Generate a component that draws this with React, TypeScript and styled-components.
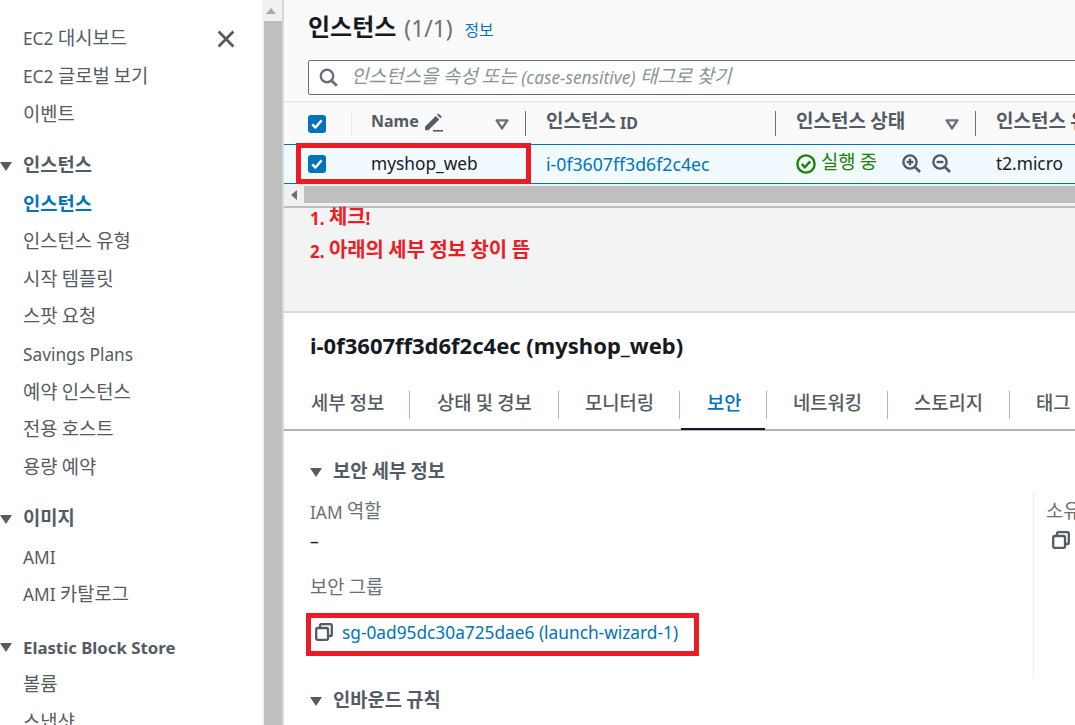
import React from "react";
import styled, { createGlobalStyle } from "styled-components";

const Global = createGlobalStyle`
  html, body { margin: 0; padding: 0; background: #fff; }
  body { font-family: "Noto Sans", "Noto Sans CJK KR", sans-serif; font-size: 17.3px; color: #16191f; --ko: 18.75px; }
  * { box-sizing: border-box; }
`;

const HangulRun = styled.span`
  font-family: "Noto Sans CJK KR", sans-serif;
  font-size: var(--ko);
  line-height: 1;
  position: relative;
  top: -1px;
`;

/* Hangul in the reference is set larger than the Latin beside it. */
const T = ({ children }: { children: string }) => (
  <>
    {children.split(/([\uAC00-\uD7A3][\uAC00-\uD7A3 ]*[\uAC00-\uD7A3]|[\uAC00-\uD7A3])/).map((part, i) =>
      i % 2 === 1 ? <HangulRun key={i}>{part}</HangulRun> : part
    )}
  </>
);

const Page = styled.div`
  position: relative;
  display: flex;
  width: 1075px;
  height: 725px;
  overflow: hidden;
`;

const Sidebar = styled.nav`
  position: relative;
  width: 262px;
  flex: none;
  padding-top: 20px;
  overflow: hidden;
  background: #fff;
`;

const CloseButton = styled.svg`
  position: absolute;
  left: 217px;
  top: 30px;
  width: 18px;
  height: 18px;
`;

const NavItem = styled.div<{ $active?: boolean }>`
  height: 37.6px;
  padding-left: 23px;
  display: flex;
  align-items: center;
  white-space: pre;
  font-weight: ${(p) => (p.$active ? 700 : 400)};
  color: ${(p) => (p.$active ? "#0073bb" : "#545b64")};
`;

const NavGroup = styled.div`
  height: 37.6px;
  margin-top: 14.8px;
  display: flex;
  align-items: center;
  gap: 11px;
  font-size: 16.8px;
  font-weight: 700;
  color: #545b64;
  white-space: pre;
`;

const Caret = styled.svg`
  width: 12px;
  height: 9px;
  flex: none;
`;

const ScrollRail = styled.div`
  width: 22px;
  flex: none;
  display: flex;
  flex-direction: column;
  background: #f1f1f1;
  border-right: 2px solid #d5dbdb;
`;

const ScrollUp = styled.div`
  height: 21px;
  flex: none;
  display: flex;
  align-items: center;
  justify-content: center;
  padding-right: 2px;
`;

const ScrollThumb = styled.div`
  flex: 1;
  margin-left: 2px;
  background: #bfbfbf;
`;

const Main = styled.main`
  width: 791px;
  flex: none;
  display: flex;
  flex-direction: column;
  overflow: hidden;
  background: #fff;
`;

const TopPanel = styled.section`
  height: 103px;
  flex: none;
  padding: 11px 0 0 24px;
  background: #fafafa;
  border-bottom: 2px solid #eaeded;
`;

const TitleRow = styled.div`
  display: flex;
  align-items: baseline;
  height: 34px;
  white-space: pre;
`;

const Title = styled.h1`
  margin: 0;
  --ko: 24px;
  font-size: 24px;
  line-height: 34px;
  font-weight: 700;
  color: #16191f;
`;

const Count = styled.span`
  margin-left: 8px;
  font-size: 22.8px;
  color: #687078;
`;

const InfoLink = styled.a`
  margin-left: 12px;
  --ko: 15.8px;
  color: #0073bb;
`;

const SearchBox = styled.div`
  width: 820px;
  height: 35px;
  margin-top: 15px;
  display: flex;
  align-items: center;
  padding-left: 10px;
  gap: 13px;
  background: #fff;
  border: 1px solid #687078;
  border-radius: 2px;
`;

const Placeholder = styled.span`
  --ko: 19px;
  font-style: italic;
  color: #879596;
  white-space: pre;
`;

const Table = styled.div`
  flex: none;
  width: 900px;
`;

const HeaderRow = styled.div`
  display: flex;
  height: 41px;
  align-items: center;
  background: #fafafa;
`;

const Row = styled.div`
  display: flex;
  height: 40px;
  align-items: center;
  background: #f1faff;
  border-top: 1px solid #0073bb;
  border-bottom: 1px solid #0073bb;
`;

const Cell = styled.div<{ $w: number; $divider?: "light" | "dark" }>`
  width: ${(p) => p.$w}px;
  height: 25px;
  flex: none;
  display: flex;
  align-items: center;
  white-space: pre;
  border-right: ${(p) =>
    p.$divider === "light" ? "1px solid #eaeded" : p.$divider === "dark" ? "1px solid #687078" : "none"};
`;

const CheckCell = styled(Cell)`
  padding-left: 24px;
`;

const TextCell = styled(Cell)<{ $pad?: number }>`
  padding-left: ${(p) => p.$pad ?? 20}px;
  padding-bottom: 1px;
`;

const HeaderCell = styled(TextCell)`
  --ko: 19px;
  font-weight: 700;
  font-size: 16px;
  color: #545b64;
  justify-content: space-between;
  padding-right: 16px;
  padding-bottom: 2px;
`;

const HeaderLabel = styled.span`
  display: flex;
  align-items: center;
  gap: 5px;
  position: relative;
  top: -2px;
`;

const Check = styled.span`
  width: 18px;
  height: 18px;
  flex: none;
  display: flex;
  align-items: center;
  justify-content: center;
  background: #0073bb;
  border-radius: 3px;
`;

const RowLink = styled.a`
  color: #0073bb;
  font-size: 17.7px;
`;

const Status = styled.span`
  display: flex;
  align-items: center;
  gap: 5px;
  color: #1d8102;
`;

const ZoomIcons = styled.span`
  display: flex;
  gap: 11px;
  margin-left: 25px;
`;

const HScroll = styled.div`
  height: 24px;
  flex: none;
  display: flex;
  align-items: stretch;
  padding: 2px 0 3px;
  background: #f1f1f1;
  border-bottom: 2px solid #b9bdbd;
`;

const HScrollLeft = styled.div`
  width: 20px;
  flex: none;
  display: flex;
  align-items: center;
  justify-content: center;
`;

const HScrollThumb = styled.div`
  flex: 1;
  background: #bfbfbf;
`;

const Gap = styled.div`
  height: 105px;
  flex: none;
  padding: 0 0 0 26px;
  background: #f2f3f3;
  border-bottom: 2px solid #d5dbdb;
`;

const Note = styled.div`
  height: 33px;
  display: flex;
  align-items: center;
  --ko: 19.9px;
  font-size: 17px;
  font-weight: 700;
  color: #ec1c24;
  white-space: pre;
  position: relative;
  top: -6px;
`;

const Detail = styled.section`
  flex: 1;
  display: flex;
  flex-direction: column;
`;

const DetailTitle = styled.h2`
  height: 69px;
  margin: 0;
  padding: 0 0 6px 26px;
  display: flex;
  align-items: center;
  font-size: 22px;
  font-weight: 700;
  color: #16191f;
  white-space: pre;
  flex: none;
`;

const Tabs = styled.div`
  height: 49px;
  flex: none;
  display: flex;
  align-items: flex-start;
  padding-top: 9px;
  border-bottom: 2px solid #aab7b8;
  position: relative;
`;

const Tab = styled.div<{ $w: number; $active?: boolean; $pad: number; $last?: boolean }>`
  position: relative;
  width: ${(p) => p.$w}px;
  height: 28px;
  flex: none;
  padding: 0 0 4px ${(p) => p.$pad}px;
  display: flex;
  align-items: center;
  white-space: pre;
  font-weight: 500;
  color: ${(p) => (p.$active ? "#0073bb" : "#545b64")};
  border-right: ${(p) => (p.$last ? "none" : "1px solid #aab7b8")};
  ${(p) =>
    p.$active
      ? `&::after { content: ""; position: absolute; left: 1px; right: 1px; top: 37px; height: 2px; background: #16191f; }`
      : ""}
`;

const DetailBody = styled.div`
  flex: 1;
  display: flex;
  flex-direction: column;
  padding: 0 0 0 26px;
  overflow: hidden;
`;

const SectionHead = styled.div<{ $top: number }>`
  flex: none;
  height: 24px;
  margin-top: ${(p) => p.$top}px;
  display: flex;
  align-items: center;
  gap: 11px;
  font-size: 16.8px;
  font-weight: 700;
  color: #545b64;
  white-space: pre;
`;

const SecurityGrid = styled.div`
  flex: none;
  display: flex;
  height: 187px;
  margin-top: 7px;
`;

const LeftCol = styled.div`
  width: 724px;
  flex: none;
  border-right: 1px solid #eaeded;
  display: flex;
  flex-direction: column;
  padding-top: 9px;
`;

const RightCol = styled.div`
  padding: 9px 0 0 12px;
  display: flex;
  flex-direction: column;
`;

const Label = styled.div<{ $top?: number }>`
  height: 24px;
  margin-top: ${(p) => p.$top ?? 0}px;
  display: flex;
  align-items: center;
  color: #687078;
  white-space: pre;
`;

const Dash = styled.div`
  height: 24px;
  margin-top: 5px;
  display: flex;
  align-items: center;
  color: #16191f;
`;

const GroupLink = styled.div`
  height: 24px;
  margin-top: 20px;
  padding-left: 5px;
  display: flex;
  align-items: center;
  gap: 9px;
  color: #0073bb;
  white-space: pre;
`;

const CopyRight = styled.div`
  margin: 7px 0 0 6px;
`;

const RedBox = styled.div<{ $l: number; $t: number; $w: number; $h: number }>`
  position: absolute;
  left: ${(p) => p.$l}px;
  top: ${(p) => p.$t}px;
  width: ${(p) => p.$w}px;
  height: ${(p) => p.$h}px;
  border: 5px solid #ec1c24;
  pointer-events: none;
`;

const CaretDown = () => (
  <Caret viewBox="0 0 12 9">
    <path d="M0 0h12L6 9z" fill="#545b64" />
  </Caret>
);

const FilterCaret = () => (
  <svg width="14" height="11" viewBox="0 0 14 11" style={{ position: "relative", top: 2 }}>
    <path d="M1.6 1.4h10.8L7 9.4z" fill="none" stroke="#687078" strokeWidth="2.4" strokeLinejoin="round" />
  </svg>
);

const CheckBox = () => (
  <Check>
    <svg width="14" height="14" viewBox="0 0 14 14">
      <path d="M2.2 7.4l3.2 3.2 6.2-7.2" fill="none" stroke="#fff" strokeWidth="2.4" />
    </svg>
  </Check>
);

const Copy = () => (
  <svg width="18" height="18" viewBox="0 0 18 18" fill="none" stroke="#545b64" strokeWidth="2.3" style={{ flex: "none" }}>
    <rect x="1.2" y="5" width="11.8" height="11.8" rx="1.5" />
    <path d="M5 4.6V2.6c0-.8.6-1.4 1.4-1.4h9c.8 0 1.4.6 1.4 1.4v9c0 .8-.6 1.4-1.4 1.4h-2" />
  </svg>
);

const Magnifier = ({ plus }: { plus?: boolean }) => (
  <svg width="19" height="19" viewBox="0 0 19 19" fill="none" stroke="#545b64" strokeWidth="2.4">
    <circle cx="8" cy="8" r="6.6" />
    <path d="M13 13l5 5" strokeWidth="2.6" />
    <path d="M4.6 8h6.8" />
    {plus && <path d="M8 4.6v6.8" />}
  </svg>
);

const navTop = ["EC2 대시보드", "EC2 글로벌 보기", "이벤트"];
const navInstances = ["인스턴스 유형", "시작 템플릿", "스팟 요청", "Savings Plans", "예약 인스턴스", "전용 호스트", "용량 예약"];
const navImages = ["AMI", "AMI 카탈로그"];
const navEbs = ["볼륨", "스냅샷"];

export default function App() {
  return (
    <Page>
      <Global />
      <Sidebar>
        <CloseButton viewBox="0 0 17 17">
          <path d="M1.5 1.5l14 14M15.5 1.5l-14 14" stroke="#545b64" strokeWidth="2.6" fill="none" />
        </CloseButton>
        {navTop.map((t) => (
          <NavItem key={t}><T>{t}</T></NavItem>
        ))}
        <NavGroup>
          <CaretDown />
          <span><T>인스턴스</T></span>
        </NavGroup>
        <NavItem $active><T>인스턴스</T></NavItem>
        {navInstances.map((t) => (
          <NavItem key={t}><T>{t}</T></NavItem>
        ))}
        <NavGroup>
          <CaretDown />
          <span><T>이미지</T></span>
        </NavGroup>
        {navImages.map((t) => (
          <NavItem key={t}><T>{t}</T></NavItem>
        ))}
        <NavGroup>
          <CaretDown />
          Elastic Block Store
        </NavGroup>
        {navEbs.map((t) => (
          <NavItem key={t}><T>{t}</T></NavItem>
        ))}
      </Sidebar>
      <ScrollRail>
        <ScrollUp>
          <svg width="10" height="6" viewBox="0 0 10 6">
            <path d="M0 6h10L5 0z" fill="#a8a8a8" />
          </svg>
        </ScrollUp>
        <ScrollThumb />
      </ScrollRail>
      <Main>
        <TopPanel>
          <TitleRow>
            <Title><T>인스턴스</T></Title>
            <Count>(1/1)</Count>
            <InfoLink><T>정보</T></InfoLink>
          </TitleRow>
          <SearchBox>
            <svg width="19" height="19" viewBox="0 0 19 19" fill="none" stroke="#687078" style={{ flex: "none" }}>
              <circle cx="8" cy="8" r="6.2" strokeWidth="2.4" />
              <path d="M12.5 12.5l5.3 5.3" strokeWidth="2.8" />
            </svg>
            <Placeholder><T>인스턴스을 속성 또는 (case-sensitive) 태그로 찾기</T></Placeholder>
          </SearchBox>
        </TopPanel>
        <Table>
          <HeaderRow>
            <CheckCell $w={68} $divider="light">
              <CheckBox />
            </CheckCell>
            <HeaderCell $w={174} $divider="dark" $pad={19}>
              <HeaderLabel>
                Name
                <svg width="20" height="20" viewBox="0 0 20 20" style={{ position: "relative", top: 1 }}>
                  <path d="M1 14.8L11.8 4l3.4 3.4L4.4 18.2H1zM13 2.8l1.4-1.4 3.4 3.4-1.4 1.4z" fill="#545b64" />
                  <path d="M9 18.8h10" stroke="#545b64" strokeWidth="1.6" />
                </svg>
              </HeaderLabel>
              <FilterCaret />
            </HeaderCell>
            <HeaderCell $w={250} $divider="dark">
              <span><T>인스턴스 ID</T></span>
            </HeaderCell>
            <HeaderCell $w={200} $divider="dark">
              <span><T>인스턴스 상태</T></span>
              <FilterCaret />
            </HeaderCell>
            <HeaderCell $w={200}>
              <span><T>인스턴스 유형</T></span>
            </HeaderCell>
          </HeaderRow>
          <Row>
            <CheckCell $w={68}>
              <CheckBox />
            </CheckCell>
            <TextCell $w={174} $pad={19}>myshop_web</TextCell>
            <TextCell $w={250}>
              <RowLink>i-0f3607ff3d6f2c4ec</RowLink>
            </TextCell>
            <TextCell $w={200}>
              <Status>
                <svg width="20" height="20" viewBox="0 0 20 20" fill="none" stroke="#1d8102" strokeWidth="2.4">
                  <circle cx="10" cy="10" r="8.6" />
                  <path d="M5.8 10.2l3 3 5.4-5.8" />
                </svg>
                <span><T>실행 중</T></span>
              </Status>
              <ZoomIcons>
                <Magnifier plus />
                <Magnifier />
              </ZoomIcons>
            </TextCell>
            <TextCell $w={200}>t2.micro</TextCell>
          </Row>
        </Table>
        <HScroll>
          <HScrollLeft>
            <svg width="6" height="10" viewBox="0 0 6 10">
              <path d="M6 0v10L0 5z" fill="#6f6f6f" />
            </svg>
          </HScrollLeft>
          <HScrollThumb />
        </HScroll>
        <Gap>
          <Note><span><T>1. 체크!</T></span></Note>
          <Note><span><T>2. 아래의 세부 정보 창이 뜸</T></span></Note>
        </Gap>
        <Detail>
          <DetailTitle>i-0f3607ff3d6f2c4ec (myshop_web)</DetailTitle>
          <Tabs>
            <Tab $w={126} $pad={27}><T>세부 정보</T></Tab>
            <Tab $w={149} $pad={27}><T>상태 및 경보</T></Tab>
            <Tab $w={121} $pad={26}><T>모니터링</T></Tab>
            <Tab $w={87} $pad={27} $active><T>보안</T></Tab>
            <Tab $w={121} $pad={26}><T>네트워킹</T></Tab>
            <Tab $w={122} $pad={26}><T>스토리지</T></Tab>
            <Tab $w={100} $pad={26} $last><T>태그</T></Tab>
          </Tabs>
          <DetailBody>
            <SectionHead $top={29}>
              <CaretDown />
              <span><T>보안 세부 정보</T></span>
            </SectionHead>
            <SecurityGrid>
              <LeftCol>
                <Label><span><T>IAM 역할</T></span></Label>
                <Dash>–</Dash>
                <Label $top={23}><span><T>보안 그룹</T></span></Label>
                <GroupLink>
                  <Copy />
                  sg-0ad95dc30a725dae6 (launch-wizard-1)
                </GroupLink>
              </LeftCol>
              <RightCol>
                <Label><span><T>소유자</T></span></Label>
                <CopyRight>
                  <Copy />
                </CopyRight>
              </RightCol>
            </SecurityGrid>
            <SectionHead $top={11}>
              <CaretDown />
              <span><T>인바운드 규칙</T></span>
            </SectionHead>
          </DetailBody>
        </Detail>
      </Main>
      <RedBox $l={296} $t={143} $w={235} $h={41} />
      <RedBox $l={306} $t={613} $w={393} $h={43} />
    </Page>
  );
}
